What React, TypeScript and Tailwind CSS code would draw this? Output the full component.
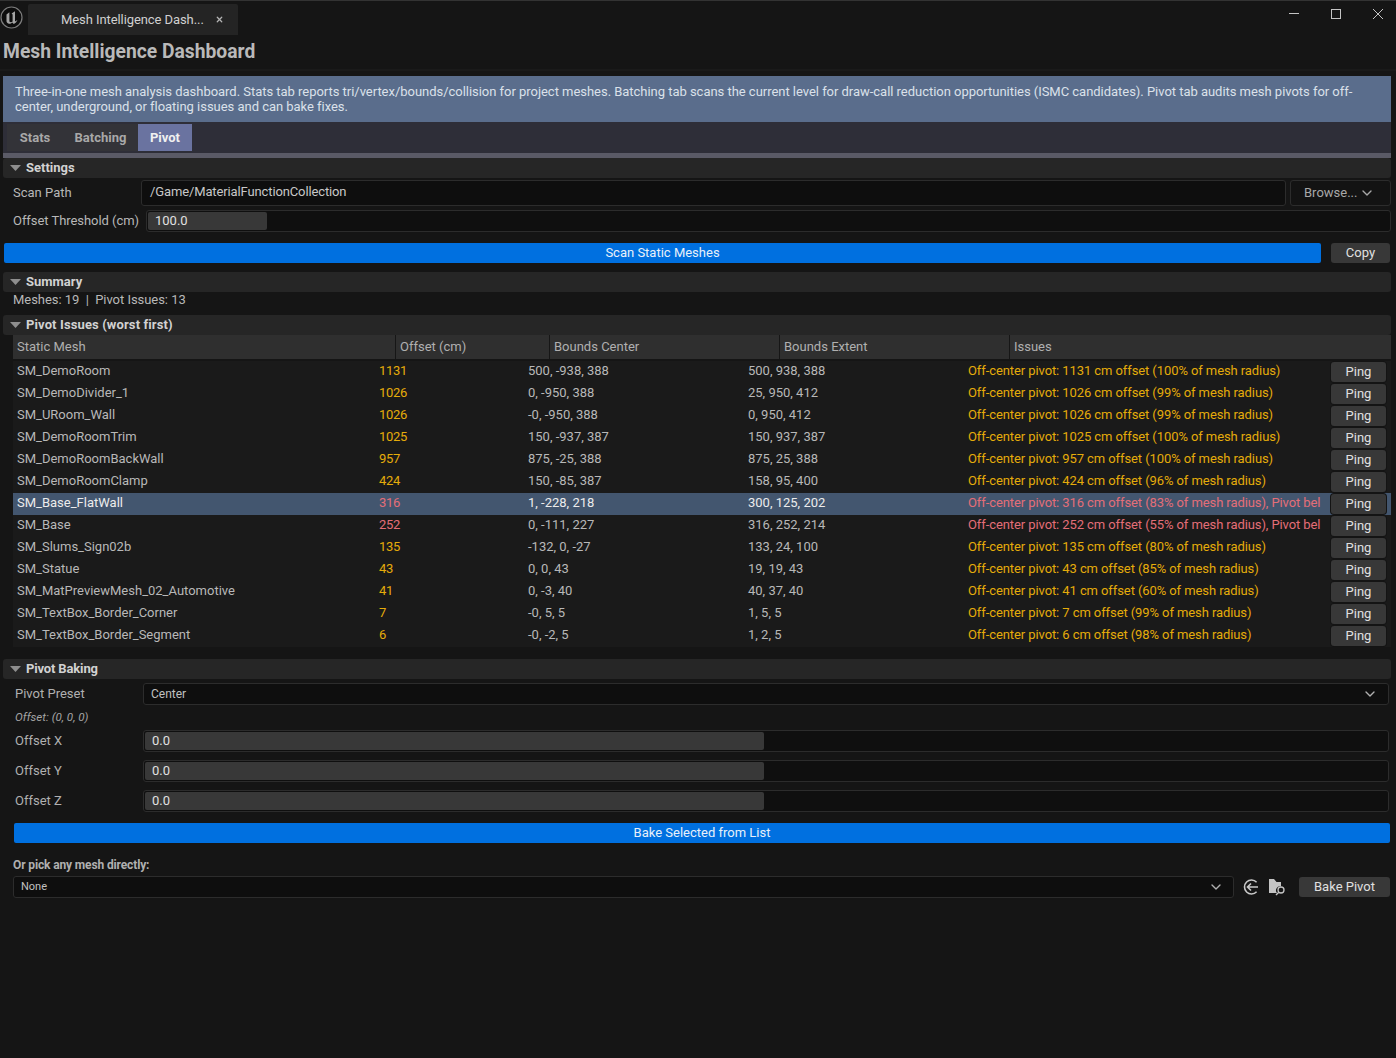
import { ChevronDown, X } from "lucide-react";

type Row = {
  name: string;
  offset: string;
  center: string;
  extent: string;
  issue: string;
  severe?: boolean;
  selected?: boolean;
};

const rows: Row[] = [
  { name: "SM_DemoRoom", offset: "1131", center: "500, -938, 388", extent: "500, 938, 388", issue: "Off-center pivot: 1131 cm offset (100% of mesh radius)" },
  { name: "SM_DemoDivider_1", offset: "1026", center: "0, -950, 388", extent: "25, 950, 412", issue: "Off-center pivot: 1026 cm offset (99% of mesh radius)" },
  { name: "SM_URoom_Wall", offset: "1026", center: "-0, -950, 388", extent: "0, 950, 412", issue: "Off-center pivot: 1026 cm offset (99% of mesh radius)" },
  { name: "SM_DemoRoomTrim", offset: "1025", center: "150, -937, 387", extent: "150, 937, 387", issue: "Off-center pivot: 1025 cm offset (100% of mesh radius)" },
  { name: "SM_DemoRoomBackWall", offset: "957", center: "875, -25, 388", extent: "875, 25, 388", issue: "Off-center pivot: 957 cm offset (100% of mesh radius)" },
  { name: "SM_DemoRoomClamp", offset: "424", center: "150, -85, 387", extent: "158, 95, 400", issue: "Off-center pivot: 424 cm offset (96% of mesh radius)" },
  { name: "SM_Base_FlatWall", offset: "316", center: "1, -228, 218", extent: "300, 125, 202", issue: "Off-center pivot: 316 cm offset (83% of mesh radius), Pivot bel", severe: true, selected: true },
  { name: "SM_Base", offset: "252", center: "0, -111, 227", extent: "316, 252, 214", issue: "Off-center pivot: 252 cm offset (55% of mesh radius), Pivot bel", severe: true },
  { name: "SM_Slums_Sign02b", offset: "135", center: "-132, 0, -27", extent: "133, 24, 100", issue: "Off-center pivot: 135 cm offset (80% of mesh radius)" },
  { name: "SM_Statue", offset: "43", center: "0, 0, 43", extent: "19, 19, 43", issue: "Off-center pivot: 43 cm offset (85% of mesh radius)" },
  { name: "SM_MatPreviewMesh_02_Automotive", offset: "41", center: "0, -3, 40", extent: "40, 37, 40", issue: "Off-center pivot: 41 cm offset (60% of mesh radius)" },
  { name: "SM_TextBox_Border_Corner", offset: "7", center: "-0, 5, 5", extent: "1, 5, 5", issue: "Off-center pivot: 7 cm offset (99% of mesh radius)" },
  { name: "SM_TextBox_Border_Segment", offset: "6", center: "-0, -2, 5", extent: "1, 2, 5", issue: "Off-center pivot: 6 cm offset (98% of mesh radius)" },
];

function SectionHeader({ title, className = "" }: { title: string; className?: string }) {
  return (
    <div className={`flex h-5 items-center rounded-[3px] bg-[#262626] pb-[2px] pl-[7px] text-[13px] font-bold text-[#d2d2d2] ${className}`}>
      <svg width="11" height="6" viewBox="0 0 11 6" className="mr-[5px] mt-[2px]">
        <path d="M0 0h11L5.5 6z" fill="#8e8e8e" />
      </svg>
      {title}
    </div>
  );
}

function OffsetRow({ label, mt }: { label: string; mt: string }) {
  return (
    <div className={`ml-[15px] mr-[2px] flex h-[22px] items-center ${mt}`}>
      <span className="w-[128px] pb-[2px] text-[#b0b0b0]">{label}</span>
      <div className="h-full flex-1 rounded-[3px] border border-[#2c2c2c] bg-[#0f0f0f] p-px">
        <div className="flex h-full w-[619px] items-center rounded-[2px] bg-[#383838] pb-[2px] pl-[7px] text-[#e0e0e0]">0.0</div>
      </div>
    </div>
  );
}

function MeshRow({ row }: { row: Row }) {
  const color = row.severe ? "text-[#e46e78]" : "text-[#e5ac0a]";
  const plain = row.selected ? "text-[#ececec]" : "text-[#b8b8b8]";
  return (
    <div className={`flex h-[22px] items-center ${row.selected ? "bg-[#43566f]" : ""}`}>
      <div className="flex h-full w-[1318px] items-center pb-1 pl-1">
        <span className={`w-[362px] shrink-0 ${plain}`}>{row.name}</span>
        <span className={`w-[149px] shrink-0 tracking-[-0.3px] ${color}`}>{row.offset}</span>
        <span className={`w-[220px] shrink-0 ${plain}`}>{row.center}</span>
        <span className={`w-[220px] shrink-0 ${plain}`}>{row.extent}</span>
        <span className={`w-[353px] shrink-0 overflow-hidden whitespace-nowrap tracking-[-0.09px] ${color}`}>{row.issue}</span>
      </div>
      <button className="h-5 w-[55px] rounded-[3px] bg-[#383838] pb-[2px] text-center text-[#e0e0e0] ring-1 ring-[#141414]">Ping</button>
    </div>
  );
}

export default function App() {
  return (
    <div
      className="flex h-[1058px] w-[1396px] flex-col overflow-hidden border-t border-[#333333] bg-[#151515] text-[13px] leading-[15px] text-[#b8b8b8]"
      style={{ fontFamily: "Roboto, 'Noto Sans', sans-serif" }}
    >
      {/* Title bar */}
      <div className="flex h-[35px] shrink-0 items-start">
        <svg width="24" height="24" viewBox="0 0 24 24" className="mt-[5px]">
          <circle cx="11.5" cy="11.5" r="10.5" fill="#0d0d0d" stroke="#7c7c7c" strokeWidth="1.2" />
          <path d="M6.5 8.6 9.4 6.2v9.2c.7 1 2.3 1 3.2.1V8.4l-1-.9 3.4-2.3v10.4l2.4-1.7c-.7 1.8-2 3.2-3.6 4.1l-1.5-1.6c-1.5 1.5-4 1.8-5.1.4-.6-.7-.7-1.4-.7-2.4z" fill="#a4a4a4" />
        </svg>
        <div className="ml-1 mt-[3px] flex h-[31px] w-[210px] items-center rounded-t-[2px] bg-[#242424] pl-[33px] text-[#d0d0d0]">
          <span className="w-[154px] whitespace-nowrap tracking-[-0.08px]">Mesh Intelligence Dash...</span>
          <X size={9} strokeWidth={3.2} className="text-[#b4b4b4]" />
        </div>
        <div className="ml-auto mr-[13px] mt-[7px] flex h-[11px] items-center">
          <div className="h-px w-[10px] bg-[#c4c4c4]" />
          <div className="ml-[32px] h-[10px] w-[10px] border border-[#c4c4c4]" />
          <svg width="10" height="10" viewBox="0 0 10 10" className="ml-[32px]" stroke="#c4c4c4" strokeWidth="1">
            <path d="M0 0 10 10M10 0 0 10" />
          </svg>
        </div>
      </div>

      <div className="flex h-[35px] shrink-0 items-center border-b-2 border-[#1a1a1a] pb-px pl-[3px] text-[19.3px] font-bold leading-6 text-[#b9b9b9]">
        Mesh Intelligence Dashboard
      </div>

      <div className="ml-[3px] mr-[5px] mt-[5px] flex h-[46px] shrink-0 items-center bg-[#5a6d8c] px-3 tracking-[-0.03px] text-[#dbe1ea]">
        <p className="leading-[15px]">
          Three-in-one mesh analysis dashboard. Stats tab reports tri/vertex/bounds/collision for project meshes. Batching tab scans the current level for draw-call reduction opportunities (ISMC candidates). Pivot tab audits mesh pivots for off-center, underground, or floating issues and can bake fixes.
        </p>
      </div>

      {/* Tabs */}
      <div className="ml-[3px] mr-[5px] flex h-[31px] shrink-0 bg-[#2e2e38] pl-1 pt-[2px]">
        <div className="flex h-[27px] bg-[#333338] font-bold text-[#a8a8a8]">
          <div className="flex w-[56px] items-center justify-center">Stats</div>
          <div className="flex w-[75px] items-center justify-center">Batching</div>
        </div>
        <div className="flex h-[27px] w-[54px] items-center justify-center bg-[#6a73a0] font-bold text-[#f0f0f0]">Pivot</div>
      </div>
      <div className="ml-[3px] mr-[5px] h-[5px] shrink-0 bg-[#5a5a66]" />

      <div className="ml-[3px] mr-[5px] flex shrink-0 flex-col">
        <SectionHeader title="Settings" />
        <div className="mt-[2px] flex h-[26px] items-center">
          <span className="w-[138px] pb-px pl-[10px]">Scan Path</span>
          <div className="flex h-full flex-1 items-center rounded-[3px] border border-[#2c2c2c] bg-[#0e0e0e] pb-1 pl-2 tracking-[-0.125px] text-[#c8c8c8]">
            /Game/MaterialFunctionCollection
          </div>
          <div className="ml-[4px] flex h-full w-[101px] items-center rounded-[3px] border border-[#2c2c2c] bg-[#131313] pl-[13px] text-[#a8a8a8]">
            <span className="pb-[2px]">Browse...</span>
            <ChevronDown size={16} strokeWidth={2} className="ml-[2px]" />
          </div>
        </div>
        <div className="mt-1 flex h-[22px] items-center">
          <span className="w-[143px] whitespace-nowrap pb-[2px] pl-[10px] tracking-[-0.05px]">Offset Threshold (cm)</span>
          <div className="h-full flex-1 rounded-[3px] border border-[#2c2c2c] bg-[#0f0f0f] p-px">
            <div className="flex h-full w-[119px] items-center rounded-[2px] bg-[#383838] pb-[2px] pl-[7px] text-[#e0e0e0]">100.0</div>
          </div>
        </div>
        <div className="mt-[11px] flex h-5 items-center">
          <button className="ml-px h-full w-[1317px] rounded-[2px] bg-[#0070e0] pb-[2px] text-center text-[#e8f0fa]">Scan Static Meshes</button>
          <button className="ml-[10px] h-full w-[59px] rounded-[3px] bg-[#383838] pb-[2px] text-center text-[#e0e0e0]">Copy</button>
        </div>

        <div className="mt-[9px]">
          <SectionHeader title="Summary" />
        </div>
        <div className="flex h-[23px] pl-[10px] tracking-[-0.04px]">Meshes: 19&nbsp; |&nbsp; Pivot Issues: 13</div>

        <SectionHeader title="Pivot Issues (worst first)" className="tracking-[0.12px]" />
        <div className="ml-[10px]">
          <div className="flex h-6 items-center bg-[#2f2f2f] text-[#b0b0b0]">
            <span className="flex h-full w-[383px] items-center border-r border-[#161616] pb-[2px] pl-1">Static Mesh</span>
            <span className="flex h-full w-[154px] items-center border-r border-[#161616] pb-[2px] pl-1">Offset (cm)</span>
            <span className="flex h-full w-[230px] items-center border-r border-[#161616] pb-[2px] pl-1">Bounds Center</span>
            <span className="flex h-full w-[230px] items-center border-r border-[#161616] pb-[2px] pl-1">Bounds Extent</span>
            <span className="flex h-full items-center pb-[2px] pl-1">Issues</span>
          </div>
          <div className="mt-[2px] bg-[#1a1a1a]">
            {rows.map((row) => (
              <MeshRow key={row.name} row={row} />
            ))}
          </div>
        </div>
      </div>

      <div className="ml-[3px] mr-[5px] mt-3 shrink-0">
        <SectionHeader title="Pivot Baking" className="tracking-[-0.15px]" />
      </div>
      <div className="ml-[15px] mr-[7px] mt-1 flex h-[22px] shrink-0 items-center">
        <span className="w-[128px] pb-[2px] text-[#b0b0b0]">Pivot Preset</span>
        <div className="flex h-full flex-1 items-center justify-between rounded-[3px] border border-[#2c2c2c] bg-[#0e0e0e] pl-[7px] pr-[10px] text-[12px] text-[#c0c0c0]">
          Center
          <ChevronDown size={16} strokeWidth={2} className="text-[#b0b0b0]" />
        </div>
      </div>
      <div className="ml-[15px] mt-[5px] h-[20px] shrink-0 text-[11.6px] italic leading-[14px] text-[#a4a4a4]">Offset: (0, 0, 0)</div>
      <div className="mr-[5px] shrink-0">
        <OffsetRow label="Offset X" mt="" />
        <OffsetRow label="Offset Y" mt="mt-2" />
        <OffsetRow label="Offset Z" mt="mt-2" />
      </div>
      <button className="ml-[14px] mr-[6px] mt-[11px] h-5 shrink-0 rounded-[2px] bg-[#0070e0] pb-[2px] text-center text-[#e8f0fa]">Bake Selected from List</button>
      <div className="ml-[13px] mt-[15px] shrink-0 text-[12px] font-bold leading-[14px] tracking-[-0.13px] text-[#b0b0b0]">Or pick any mesh directly:</div>
      <div className="ml-[13px] mt-1 flex h-[22px] shrink-0 items-center">
        <div className="flex h-full w-[1221px] items-center justify-between rounded-[3px] border border-[#2c2c2c] bg-[#0e0e0e] pl-[7px] pr-[9px] text-[11px] text-[#c0c0c0]">
          <span className="pb-[2px]">None</span>
          <ChevronDown size={16} strokeWidth={2} className="text-[#b0b0b0]" />
        </div>
        <svg width="16" height="16" viewBox="0 0 16 16" className="ml-[9px]" fill="none" stroke="#c8c8c8" strokeWidth="1.6">
          <path d="M13.6 3.2A7 7 0 1 0 13.6 12.8" />
          <path d="M15 8H4.5M8 4.5 4.5 8 8 11.5" />
        </svg>
        <svg width="18" height="18" viewBox="0 0 18 18" className="ml-[9px]">
          <path d="M1 1h5l2.5 3H13v4.5a4 4 0 0 0-4 6.5H1z" fill="#c4c4c4" />
          <circle cx="13" cy="12" r="3" fill="none" stroke="#c4c4c4" strokeWidth="1.3" />
          <path d="M10.8 14.2 8 17" stroke="#c4c4c4" strokeWidth="1.4" />
        </svg>
        <button className="ml-[13px] h-5 w-[91px] rounded-[3px] bg-[#383838] pb-[2px] text-center text-[#e0e0e0]">Bake Pivot</button>
      </div>
    </div>
  );
}
